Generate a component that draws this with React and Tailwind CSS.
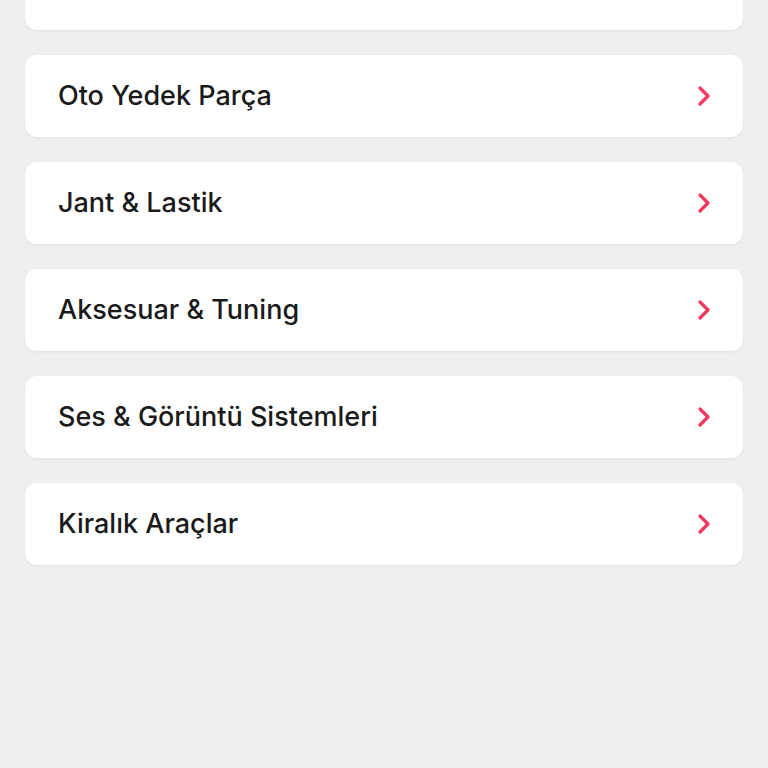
import React from 'react';

const categories = [
  'Oto Yedek Parça',
  'Jant & Lastik',
  'Aksesuar & Tuning',
  'Ses & Görüntü Sistemleri',
  'Kiralık Araçlar',
];

const Chevron = () => (
  <svg width="14" height="22" viewBox="0 0 14 22" fill="none">
    <path
      d="M3 3l8 8-8 8"
      stroke="#f0395c"
      strokeWidth="3.2"
      strokeLinecap="round"
      strokeLinejoin="round"
    />
  </svg>
);

const Card = ({ children }) => (
  <div className="h-[82px] bg-white rounded-[12px] shadow-[0_1px_3px_rgba(0,0,0,0.06)] flex items-center justify-between pl-[33px] pr-[32px]">
    {children}
  </div>
);

const App = () => {
  return (
    <div
      className="w-[768px] h-[768px] overflow-hidden bg-[#efefef]"
      style={{ fontFamily: 'Inter, "Noto Sans", sans-serif' }}
    >
      <div className="-mt-[52px] px-[25px] flex flex-col gap-[25px]">
        {/* top card, scrolled out of view */}
        <Card />
        {categories.map((name, index) => (
          <Card key={index}>
            <span className="text-[27px] font-medium text-[#1a1a1a]">{name}</span>
            <Chevron />
          </Card>
        ))}
      </div>
    </div>
  );
};

export default App;
